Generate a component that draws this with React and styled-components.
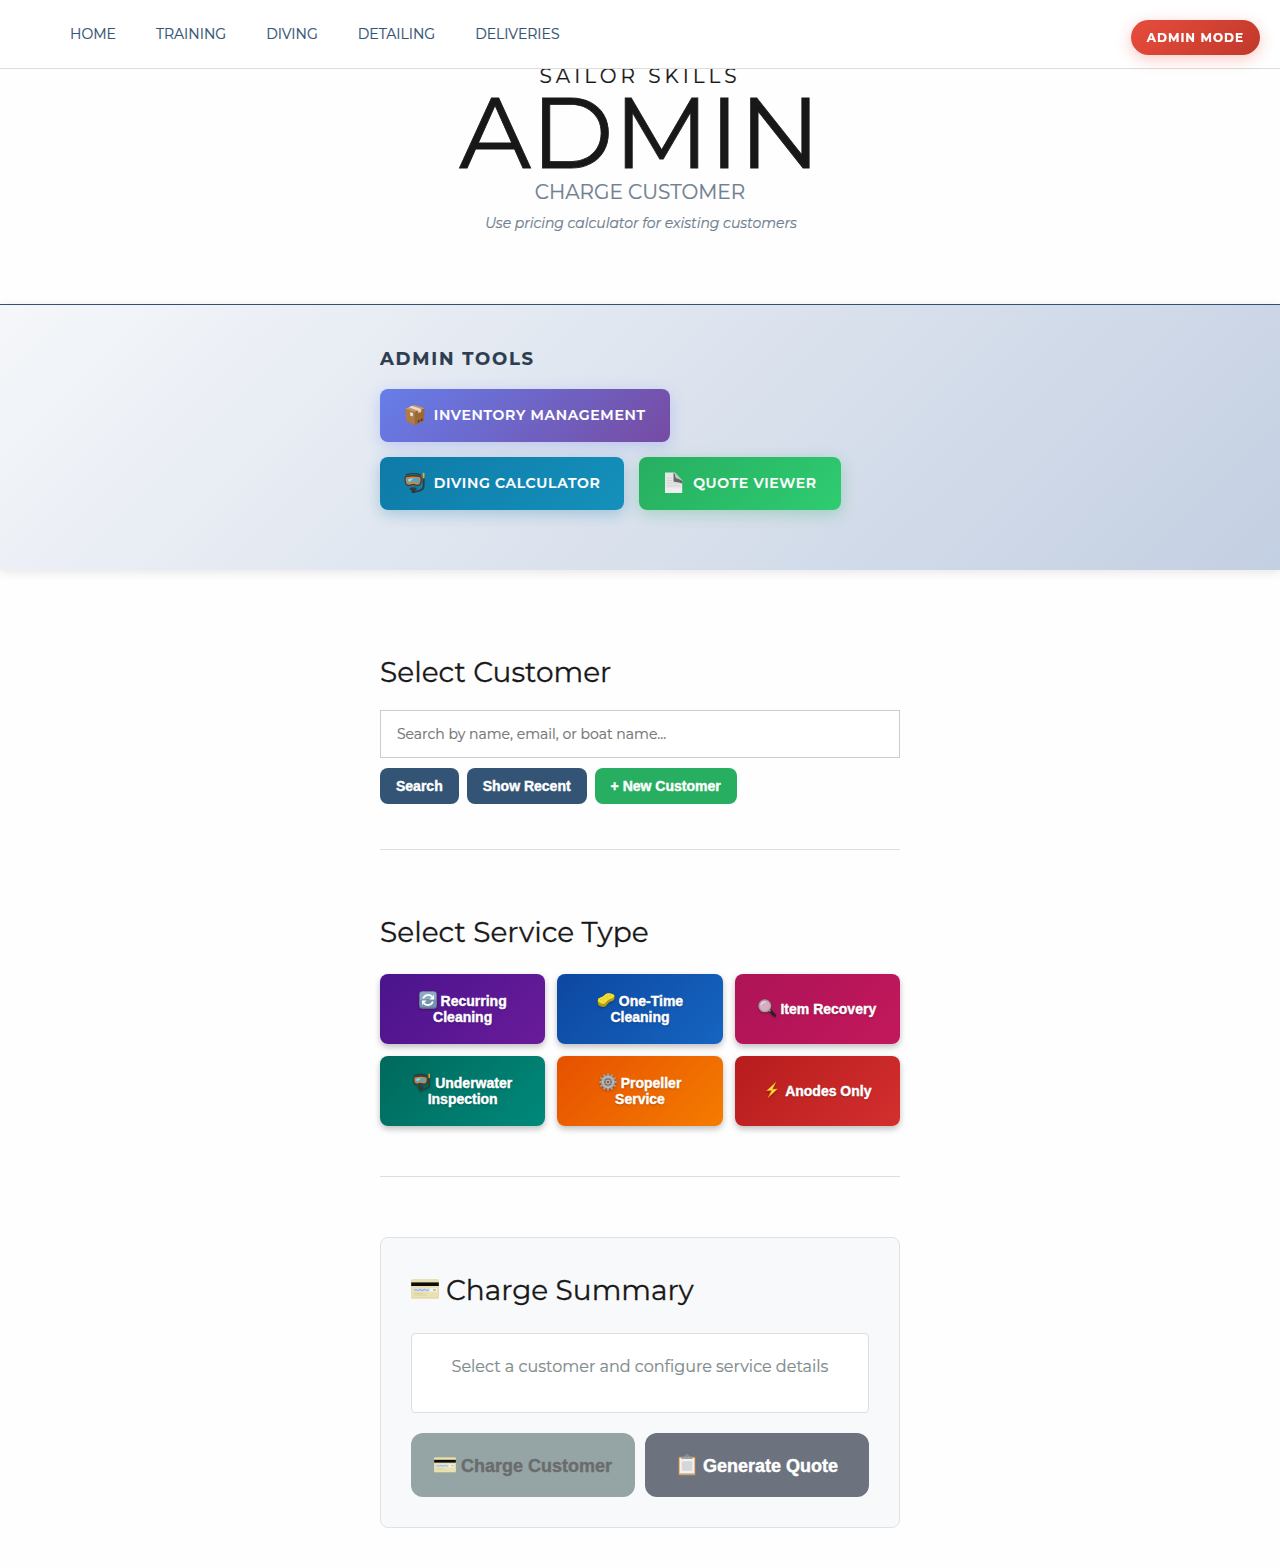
import React from 'react';
import styled, { createGlobalStyle } from 'styled-components';

const display = 'Montserrat, Inter, sans-serif';
const system = 'Arial, "Liberation Sans", sans-serif';

const GlobalStyle = createGlobalStyle`
  *, *::before, *::after { box-sizing: border-box; }
  body {
    margin: 0;
    background: #fefefe;
    color: #181818;
    font-family: ${display};
    line-height: 1.6;
    -webkit-font-smoothing: antialiased;
    -webkit-text-stroke: 0.2px;
  }
`;

/* ---------- icons ---------- */

const Glyph = styled.svg`
  display: inline-block;
  flex: none;
  width: ${(p) => p.$size}px;
  height: ${(p) => p.$size}px;
  margin-right: ${(p) => p.$space || 0}px;
  margin-bottom: ${(p) => p.$lift || 0}px;
  vertical-align: ${(p) => p.$drop || 0}px;
  filter: ${(p) => (p.$shadow ? 'drop-shadow(0 1px 1px rgba(0, 0, 0, 0.3))' : 'none')};
`;

const PackageIcon = (props) => (
  <Glyph viewBox="0 0 22 22" {...props}>
    <path d="M1.2 4.8 11 7.6V21.6L2.2 17.2Z" fill="#b07a45" />
    <path d="M11 7.6 20.8 4.4 20 16.8 11 21.6Z" fill="#9a6736" />
    <path d="M1.2 4.8 10.6 1 20.8 4.4 11 7.8Z" fill="#c99a68" />
    <path d="M5.2 3.2 8 2 17.4 5.4V8L14.4 9V6.7Z" fill="#e3cfb2" />
    <path d="M5.2 3.2 8 2 17.4 5.4 14.4 6.6Z" fill="#ecdcc4" />
    <path d="M6.2 8.4 9 9.2V12.6L6.2 11.6Z" fill="#eee7dc" />
    <path d="M14 16.8 15.6 16V18L14 18.8ZM17 15.4 18.6 14.6V16.6L17 17.4Z" fill="#4d2e16" />
  </Glyph>
);

const MaskIcon = (props) => (
  <Glyph viewBox="0 0 22 22" {...props}>
    <path d="M19.8 5V14.5C19.8 18.4 15.8 19.6 9.6 20.2" fill="none" stroke="#343b3d" strokeWidth="2" strokeLinecap="round" />
    <path d="M19.8 1.6V5.6" stroke="#f5a623" strokeWidth="1.8" strokeLinecap="round" />
    <path d="M1.8 3Q9 .2 17 3" fill="none" stroke="#3a3836" strokeWidth="1.4" />
    <path d="M1 4.2Q9.2 2 17.4 4.2Q18.6 8.8 17 12.4Q14.8 15.2 11.6 14Q9.2 12.4 6.8 14Q3.6 15.2 1.4 12.4Q-.2 8.8 1 4.2Z" fill="#433c36" />
    <path d="M2 5.4Q9.2 3.6 16.4 5.4Q17.4 8.6 16 11.6Q14.2 13.6 12 12.6Q9.2 11 6.4 12.6Q4.2 13.6 2.4 11.6Q1 8.6 2 5.4Z" fill="#dd8136" />
    <path d="M3.4 6.4Q9.2 5 15 6.4Q16 8.8 15 10.8Q13.6 12.4 12 11.2Q9.2 8.4 6.4 11.2Q4.8 12.4 3.4 10.8Q2.4 8.8 3.4 6.4Z" fill="#5fa3b4" />
    <path d="M4 7.2Q6.4 6.4 9.6 6.4L6 9.8Q4 10.4 4 7.2Z" fill="#9fd6e0" />
    <path d="M5.4 16.2Q9.2 14.6 13 16.2L11.8 18.6Q9.2 17.6 6.6 18.6Z" fill="#3d3a38" />
    <rect x="7.8" y="18" width="3" height="3.6" rx="1" fill="#303536" />
  </Glyph>
);

const PageIcon = (props) => (
  <Glyph viewBox="0 0 22 22" {...props}>
    <path d="M2 .6H11.8L19.4 8.6V21.4H2Z" fill="#e6e6e6" />
    <path d="M10.6.6 19.4 9.2V11.6L10.6 9.6Z" fill="#636866" />
    <path d="M11.6.8 12.8 6 19.4 8.6Z" fill="#c4c7c6" />
    <path d="M4 6H9M4 8.6H9M4 11.2H17M4 13.8H17M4 18.6H8" stroke="#d2d2d2" strokeWidth=".9" />
    <path d="M2.4 16.4H19V21H2.4Z" fill="#f6f6f6" opacity=".55" />
  </Glyph>
);

const RecycleIcon = (props) => (
  <Glyph viewBox="0 0 18 18" {...props}>
    <rect x=".2" y=".2" width="17.6" height="17.6" rx="3" fill="#66829c" />
    <rect x=".8" y=".8" width="16.4" height="15" rx="2.6" fill="#8dabc6" />
    <path d="M.8 9Q9 7 17.2 9V13.6Q17.2 16 14.6 16H3.4Q.8 16 .8 13.6Z" fill="#7593b0" />
    <path d="M4.2 7.6A5.2 5.2 0 0 1 13 5.6" fill="none" stroke="#fff" strokeWidth="1.8" />
    <path d="M15 3.8V8.4H10.4Z" fill="#fff" />
    <path d="M13.8 10.4A5.2 5.2 0 0 1 5 12.4" fill="none" stroke="#fff" strokeWidth="1.8" />
    <path d="M3 14.2V9.6H7.6Z" fill="#fff" />
  </Glyph>
);

const SpongeIcon = (props) => (
  <Glyph viewBox="0 0 18 18" {...props}>
    <path d="M.6 9.4Q.4 7.2 3.4 6.4Q6 5.8 7.6 3.8Q9.6 1.6 12.4 2.2L16.2 3.2Q18 4 17.6 7.2Q17.4 9.6 14.6 10.2Q12 10.8 10.2 13.4Q8.4 16.4 5 15.8Q2.2 15.4 1 13.4Z" fill="#b09a12" />
    <path d="M.8 9.2Q.8 7.2 3.6 6.6Q6.2 6 8 3.8Q9.8 1.8 12.4 2.2L16 3.2Q18 4.2 16.8 6Q15.6 7.4 13.2 8Q10.6 8.8 9.2 11Q7.4 13.6 4.4 12.6Q1.2 11.4.8 9.2Z" fill="#f0df36" />
    <path d="M3.4 8.8 4.8 8.2M7 8 8 7.2M9.4 6 10.6 5M12.4 4.8 14 4.6M6 10.6 7 10M10.4 8 11.2 7.2" stroke="#cdb81d" strokeWidth=".8" />
  </Glyph>
);

const LensIcon = (props) => (
  <Glyph viewBox="0 0 18 18" {...props}>
    <path d="M12.4 12 16.6 16.4" stroke="#222" strokeWidth="2.8" strokeLinecap="round" />
    <path d="M10.6 10.6 12.4 12.4" stroke="#8c8c8c" strokeWidth="2" />
    <circle cx="6.8" cy="6.8" r="5.9" fill="#d6adc2" stroke="#9b9b9d" strokeWidth="1.3" />
    <path d="M3 6.2Q4 2.6 7.6 2.8" fill="none" stroke="#efdde6" strokeWidth="1.2" />
  </Glyph>
);

const gearTeeth = Array.from({ length: 12 }, (_, i) => i * 30);

const GearIcon = (props) => (
  <Glyph viewBox="0 0 18 18" {...props}>
    {gearTeeth.map((a) => (
      <path key={a} d="M7.8 3 8.3.2H9.7L10.2 3Z" fill="#a0a6ac" transform={`rotate(${a} 9 9)`} />
    ))}
    <circle cx="9" cy="9" r="5.2" fill="none" stroke="#9ba2a9" strokeWidth="3.2" />
    <circle cx="9" cy="9" r="5.4" fill="none" stroke="#c6ccd1" strokeWidth=".9" />
    <path d="M9 4V14M4.7 6.5 13.3 11.5M4.7 11.5 13.3 6.5" stroke="#9ba2a9" strokeWidth="1" />
    <circle cx="9" cy="9" r="2.6" fill="#b4bbc1" stroke="#747c85" strokeWidth=".8" />
    <circle cx="9" cy="9" r="1.1" fill="#5b4a3e" />
  </Glyph>
);

const BoltIcon = (props) => (
  <Glyph viewBox="0 0 18 18" {...props}>
    <path d="M13.4.6 3 10 8.2 9.7 4.4 17.4 15 7.8 9.8 8Z" fill="#f39a1c" />
    <path d="M12.2 2.2 4.6 9.2 9.4 9 6.6 14.8 13.4 8.6 8.6 8.8Z" fill="#ffde3c" />
  </Glyph>
);

const CardIcon = (props) => (
  <Glyph viewBox="0 0 28 28" {...props}>
    <rect x=".2" y="4.4" width="27.6" height="19.2" rx="1.3" fill="#d2c88f" />
    <rect x=".2" y="4.4" width="27.6" height="18.4" rx="1.3" fill="#e9e2b0" />
    <rect x=".2" y="7.4" width="27.6" height="3.6" fill="#0c0c0a" />
    <rect x="2.4" y="13.2" width="23.6" height="3.6" fill="#f4f3ea" />
    <rect x="2.4" y="13.2" width="16.4" height="3.6" fill="#d3dce9" />
    <path d="M3 15.4 5 14.6 6.6 15.6 9 14.4 11 15.6 14 14.4 15.6 15.6 18 14.8" fill="none" stroke="#7f9dd0" strokeWidth=".8" />
    <path d="M22 15H25" stroke="#888" strokeWidth=".9" />
    <path d="M2.6 18.4H12M2.6 20H16" stroke="#d5cc9a" strokeWidth=".7" />
  </Glyph>
);

const ClipboardIcon = (props) => (
  <Glyph viewBox="0 0 22 22" {...props}>
    <rect x="2.2" y="2.4" width="17.6" height="19.4" rx="1" fill="#ab7b42" />
    <rect x="3.4" y="3.6" width="15.2" height="16.6" fill="#f1f1f1" />
    <rect x="5.8" y="7.2" width="10.4" height="9.6" fill="#d6d6d6" />
    <path d="M3.4 19H18.6V20.4H3.4Z" fill="#c4c4c4" />
    <path d="M5.4 2.8H8.8Q9.4.2 11 .2T13.2 2.8H16.6V5H5.4Z" fill="#9da0a4" />
    <circle cx="11" cy="2" r=".8" fill="#6c6f73" />
  </Glyph>
);

/* ---------- top bar ---------- */

const TopBar = styled.nav`
  position: fixed;
  inset: 0 0 auto 0;
  z-index: 10;
  display: flex;
  align-items: center;
  gap: 40px;
  height: 69px;
  padding: 0 70px;
  background: #fff;
  border-bottom: 1px solid #ddd;
`;

const NavLink = styled.a`
  color: #345475;
  font-size: 14px;
  text-decoration: none;
`;

const ModeBadge = styled.div`
  position: fixed;
  top: 20px;
  right: 20px;
  z-index: 20;
  padding: 8px 16px;
  border-radius: 20px;
  background: linear-gradient(135deg, #e74c3c, #c0392b);
  box-shadow: 0 4px 15px rgba(231, 76, 60, 0.3);
  color: #fff;
  font-size: 12px;
  font-weight: 700;
  letter-spacing: 1px;
`;

/* ---------- page header ---------- */

const Header = styled.header`
  display: flex;
  flex-direction: column;
  align-items: center;
  height: 305px;
  padding-top: 61px;
  border-bottom: 1px solid #345475;
`;

const Brand = styled.div`
  font-size: 20px;
  letter-spacing: 4px;
  line-height: 31px;
`;

const Title = styled.h1`
  margin: 0 0 4px;
  font-size: 100px;
  font-weight: 400;
  line-height: 0.8;
  -webkit-text-stroke: 0.8px;
`;

const Subtitle = styled.div`
  color: #708090;
  font-size: 20px;
`;

const Tagline = styled.p`
  margin: 4px 0 0;
  padding-left: 2px;
  color: #708090;
  font-size: 14px;
  font-style: italic;
  letter-spacing: -0.03px;
`;

/* ---------- admin tools ---------- */

const Container = styled.div`
  width: 520px;
  margin: 0 auto;
`;

const ToolsPanel = styled.section`
  height: 265px;
  padding-top: 40px;
  background: linear-gradient(135deg, #f5f7fa 0%, #c3cfe2 100%);
  box-shadow: 0 2px 10px rgba(0, 0, 0, 0.1);
`;

const ToolsTitle = styled.h3`
  margin: 0 0 15px;
  color: #2c3e50;
  font-size: 18px;
  font-weight: 700;
  letter-spacing: 1.8px;
  line-height: 29px;
`;

const ToolList = styled.div`
  display: flex;
  flex-wrap: wrap;
  gap: 15px;
`;

const ToolButton = styled.a`
  display: inline-flex;
  align-items: center;
  gap: 8px;
  height: 53px;
  padding: 0 24px;
  border-radius: 8px;
  background: linear-gradient(135deg, ${(p) => p.$from} 0%, ${(p) => p.$to} 100%);
  box-shadow: 0 4px 15px ${(p) => p.$glow};
  color: #fff;
  font-size: 14px;
  font-weight: 600;
  letter-spacing: 0.7px;
  white-space: nowrap;
`;

/* ---------- main column ---------- */

const Main = styled.main`
  padding: 80px 0 40px;
`;

const SectionTitle = styled.h2`
  display: flex;
  align-items: center;
  margin: 0 0 ${(p) => p.$gap}px;
  font-size: 28px;
  font-weight: 400;
  line-height: 45px;
  -webkit-text-stroke: 0.3px;
`;

const SearchInput = styled.input`
  display: block;
  width: 100%;
  height: 48px;
  margin-bottom: 10px;
  padding: 0 16px;
  border: 1px solid #ccc;
  border-radius: 0;
  background: #fff;
  font-family: ${display};
  font-size: 14px;
  -webkit-text-stroke: 0.2px;
  &::placeholder { color: #757575; }
`;

const ButtonRow = styled.div`
  display: flex;
  gap: ${(p) => p.$gap}px;
`;

const SmallButton = styled.button`
  height: 36px;
  padding: 0 16px;
  border: 0;
  border-radius: 8px;
  background: ${(p) => (p.$primary ? '#27ae60' : '#345475')};
  color: #fff;
  font: 700 14px ${system};
  -webkit-text-stroke: 0.4px;
`;

const Divider = styled.hr`
  height: 1px;
  margin: ${(p) => p.$above}px 0 60px;
  border: 0;
  background: #ddd;
`;

const ServiceGrid = styled.div`
  display: grid;
  grid-template-columns: repeat(3, 1fr);
  grid-auto-rows: 70px;
  gap: 12px;
`;

const ServiceButton = styled.button`
  padding: 0 20px;
  border: 0;
  border-radius: 8px;
  background: linear-gradient(135deg, ${(p) => p.$from}, ${(p) => p.$to});
  box-shadow: 0 3px 6px rgba(0, 0, 0, 0.25);
  color: #fff;
  font: 700 14px/16px ${system};
  text-shadow: 0 1px 2px rgba(0, 0, 0, 0.3);
  -webkit-text-stroke: 0.4px;
  svg { margin-top: -6px; margin-bottom: -2px; }
`;

const SummaryCard = styled.section`
  padding: 30px;
  border: 1px solid #dee2e6;
  border-radius: 8px;
  background: #f8f9fb;
`;

const SummaryBox = styled.div`
  min-height: 80px;
  margin-bottom: 20px;
  padding: 20px 19px 0;
  border: 1px solid #ddd;
  border-radius: 4px;
  background: #fff;
  color: #7f8c8d;
  font-size: 16px;
  text-align: center;
`;

const ActionButton = styled.button`
  display: flex;
  flex: 1;
  align-items: center;
  justify-content: center;
  height: 64px;
  padding: 2px 0 0;
  border: 0;
  border-radius: 12px;
  background: ${(p) => (p.disabled ? '#95a5a6' : '#6c737e')};
  color: ${(p) => (p.disabled ? '#6a6c6c' : '#fff')};
  font: 700 18px ${system};
  -webkit-text-stroke: 0.4px;
`;

const links = ['HOME', 'TRAINING', 'DIVING', 'DETAILING', 'DELIVERIES'];

const tools = [
  { label: 'INVENTORY MANAGEMENT', Icon: PackageIcon, from: '#667eea', to: '#764ba2', glow: 'rgba(102, 126, 234, 0.3)' },
  { label: 'DIVING CALCULATOR', Icon: MaskIcon, from: '#0f7aa8', to: '#1491bb', glow: 'rgba(15, 122, 168, 0.3)' },
  { label: 'QUOTE VIEWER', Icon: PageIcon, from: '#27ae60', to: '#2ecc71', glow: 'rgba(39, 174, 96, 0.3)' },
];

const services = [
  { lines: ['Recurring', 'Cleaning'], Icon: RecycleIcon, from: '#4a148c', to: '#6a1b9a' },
  { lines: ['One-Time', 'Cleaning'], Icon: SpongeIcon, from: '#0d47a1', to: '#1565c0' },
  { lines: ['Item Recovery'], Icon: LensIcon, from: '#ad1457', to: '#c2185b' },
  { lines: ['Underwater', 'Inspection'], Icon: MaskIcon, from: '#00695c', to: '#00897b' },
  { lines: ['Propeller', 'Service'], Icon: GearIcon, from: '#e65100', to: '#f57c00' },
  { lines: ['Anodes Only'], Icon: BoltIcon, from: '#b71c1c', to: '#d32f2f' },
];

export default function App() {
  return (
    <>
      <GlobalStyle />
      <TopBar>
        {links.map((l) => (
          <NavLink key={l}>{l}</NavLink>
        ))}
      </TopBar>
      <ModeBadge>ADMIN MODE</ModeBadge>

      <Header>
        <Brand>SAILOR SKILLS</Brand>
        <Title>ADMIN</Title>
        <Subtitle>CHARGE CUSTOMER</Subtitle>
        <Tagline>Use pricing calculator for existing customers</Tagline>
      </Header>

      <ToolsPanel>
        <Container>
          <ToolsTitle>ADMIN TOOLS</ToolsTitle>
          <ToolList>
            {tools.map(({ label, Icon, from, to, glow }) => (
              <ToolButton key={label} $from={from} $to={to} $glow={glow}>
                <Icon $size={21.8} $lift={2} />
                {label}
              </ToolButton>
            ))}
          </ToolList>
        </Container>
      </ToolsPanel>

      <Main>
        <Container>
          <SectionTitle $gap={15}>Select Customer</SectionTitle>
          <SearchInput placeholder="Search by name, email, or boat name..." />
          <ButtonRow $gap={8}>
            <SmallButton>Search</SmallButton>
            <SmallButton>Show Recent</SmallButton>
            <SmallButton $primary>+ New Customer</SmallButton>
          </ButtonRow>

          <Divider $above={45} />

          <SectionTitle $gap={19}>Select Service Type</SectionTitle>
          <ServiceGrid>
            {services.map(({ lines, Icon, from, to }) => (
              <ServiceButton key={lines[0]} $from={from} $to={to}>
                <Icon $size={18} $space={4} $drop={-1} $shadow />
                {lines[0]}
                {lines[1] && <br />}
                {lines[1]}
              </ServiceButton>
            ))}
          </ServiceGrid>

          <Divider $above={50} />

          <SummaryCard>
            <SectionTitle $gap={20}>
              <CardIcon $size={28} $space={7} $lift={3} />
              Charge Summary
            </SectionTitle>
            <SummaryBox>Select a customer and configure service details</SummaryBox>
            <ButtonRow $gap={10}>
              <ActionButton disabled>
                <CardIcon $size={22} $space={5} $lift={2} />
                Charge Customer
              </ActionButton>
              <ActionButton>
                <ClipboardIcon $size={22} $space={5} $lift={2} />
                Generate Quote
              </ActionButton>
            </ButtonRow>
          </SummaryCard>
        </Container>
      </Main>
    </>
  );
}
